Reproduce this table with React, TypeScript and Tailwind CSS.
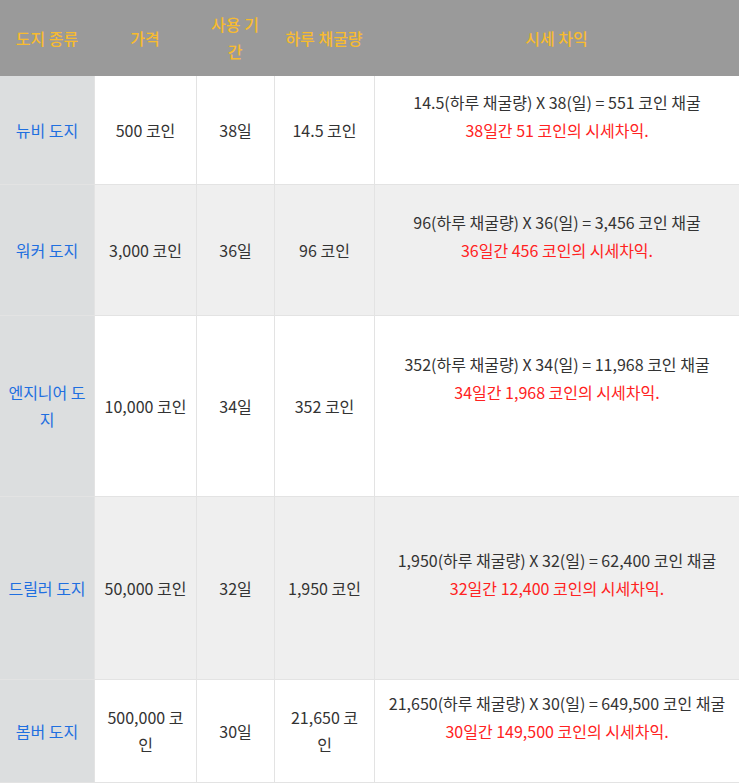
import React from 'react';

type Row = {
  name: string[];
  price: string[];
  days: string;
  daily: string[];
  formula: string;
  profit: string;
  blanks: number;
  height: string;
  bg: string;
};

const rows: Row[] = [
  {
    name: ['뉴비 도지'],
    price: ['500 코인'],
    days: '38일',
    daily: ['14.5 코인'],
    formula: '14.5(하루 채굴량) X 38(일) = 551 코인 채굴',
    profit: '38일간 51 코인의 시세차익.',
    blanks: 1,
    height: 'h-[109px]',
    bg: 'bg-white',
  },
  {
    name: ['워커 도지'],
    price: ['3,000 코인'],
    days: '36일',
    daily: ['96 코인'],
    formula: '96(하루 채굴량) X 36(일) = 3,456 코인 채굴',
    profit: '36일간 456 코인의 시세차익.',
    blanks: 1,
    height: 'h-[131px]',
    bg: 'bg-[#efefef]',
  },
  {
    name: ['엔지니어 도', '지'],
    price: ['10,000 코인'],
    days: '34일',
    daily: ['352 코인'],
    formula: '352(하루 채굴량) X 34(일) = 11,968 코인 채굴',
    profit: '34일간 1,968 코인의 시세차익.',
    blanks: 2,
    height: 'h-[181px]',
    bg: 'bg-white',
  },
  {
    name: ['드릴러 도지'],
    price: ['50,000 코인'],
    days: '32일',
    daily: ['1,950 코인'],
    formula: '1,950(하루 채굴량) X 32(일) = 62,400 코인 채굴',
    profit: '32일간 12,400 코인의 시세차익.',
    blanks: 1,
    height: 'h-[183px]',
    bg: 'bg-[#efefef]',
  },
  {
    name: ['봄버 도지'],
    price: ['500,000 코', '인'],
    days: '30일',
    daily: ['21,650 코', '인'],
    formula: '21,650(하루 채굴량) X 30(일) = 649,500 코인 채굴',
    profit: '30일간 149,500 코인의 시세차익.',
    blanks: 1,
    height: 'h-[103px]',
    bg: 'bg-white',
  },
];

const grid = 'grid grid-cols-[94px_102px_78px_100px_1fr]';

function Lines({ lines }: { lines: string[] }) {
  return (
    <div className="flex flex-col items-center">
      {lines.map((l, i) => (
        <span key={i} className="whitespace-nowrap">{l}</span>
      ))}
    </div>
  );
}

export default function App() {
  return (
    <div
      className="w-[739px] text-[16px] leading-[27px] text-[#333333]"
      style={{ fontFamily: '"Noto Sans CJK KR", "Noto Sans", sans-serif' }}
    >
      {/* header */}
      <div className={`${grid} h-[76px] bg-[#9a9a9a] font-medium text-[#f7bb2f]`}>
        <div className="flex items-center justify-center">도지 종류</div>
        <div className="flex items-center justify-center">가격</div>
        <div className="flex items-center justify-center">
          <Lines lines={['사용 기', '간']} />
        </div>
        <div className="flex items-center justify-center whitespace-nowrap">하루 채굴량</div>
        <div className="flex items-center justify-center">시세 차익</div>
      </div>

      {rows.map((r, i) => (
        <div key={i} className={`${grid} ${r.height} ${r.bg} border-b border-[#e3e3e3]`}>
          <div className="flex items-center justify-center bg-[#dcdedf] text-[#1f6fe0]">
            <Lines lines={r.name} />
          </div>
          <div className="flex items-center justify-center border-l border-[#e3e3e3]">
            <Lines lines={r.price} />
          </div>
          <div className="flex items-center justify-center border-l border-[#e3e3e3]">{r.days}</div>
          <div className="flex items-center justify-center border-l border-[#e3e3e3]">
            <Lines lines={r.daily} />
          </div>
          <div className="flex flex-col items-center justify-center border-l border-[#e3e3e3] leading-[28px]">
            <span className="whitespace-nowrap">{r.formula}</span>
            <span className="whitespace-nowrap text-[#ff2222]">{r.profit}</span>
            {Array.from({ length: r.blanks }).map((_, j) => (
              <span key={j} className="h-[28px]" />
            ))}
          </div>
        </div>
      ))}
    </div>
  );
}
